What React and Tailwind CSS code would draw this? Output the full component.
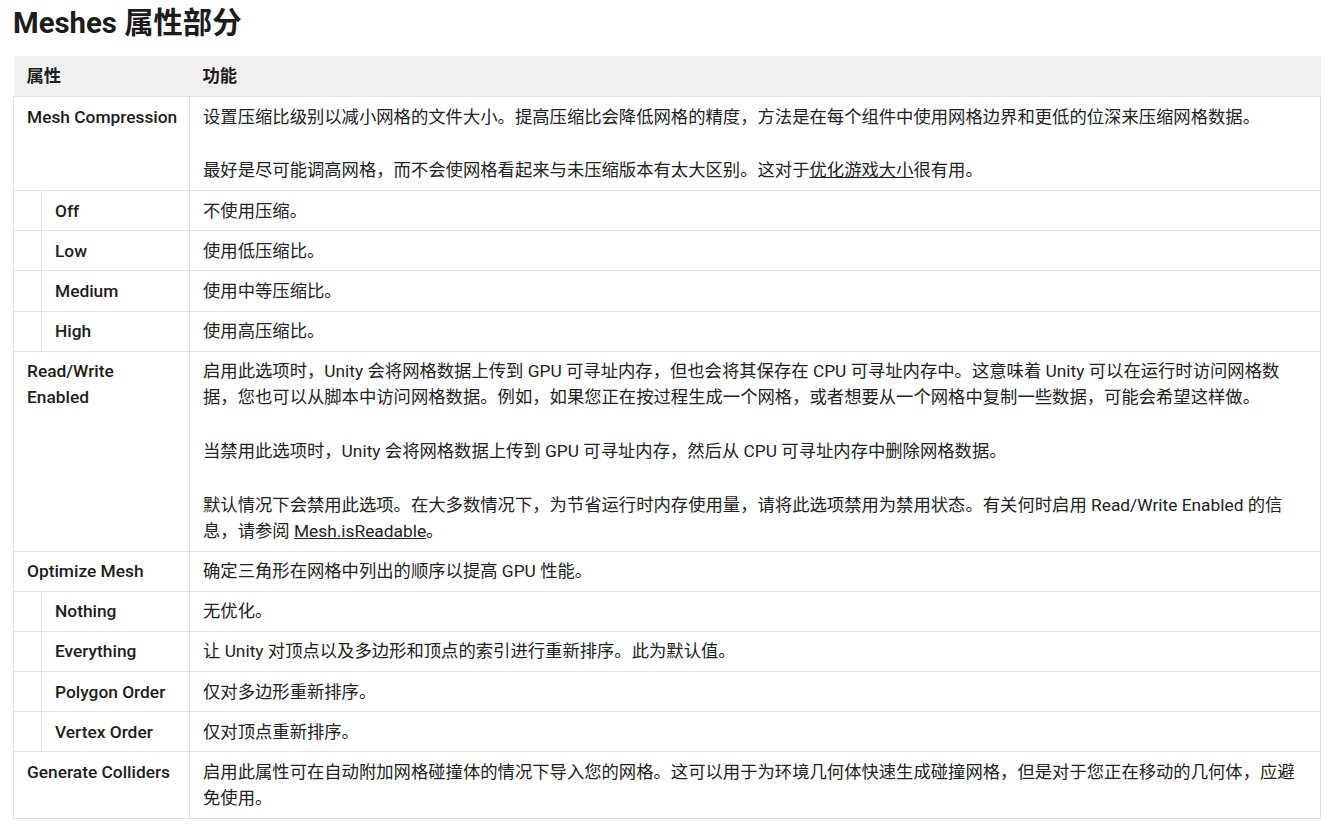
import React from "react";

const F = { fontFamily: "Roboto, 'Noto Sans CJK SC', sans-serif" };

function Main({ name, children }) {
  return (
    <tr>
      <td colSpan={2} className="border border-[#e2e2e2] pl-[13px] pr-[14px] py-[6.6px] align-top font-medium text-[#1d1d1d] whitespace-nowrap">
        {name}
      </td>
      <td className="border border-[#e2e2e2] pl-[13px] pr-[14px] py-[6.6px] align-top">{children}</td>
    </tr>
  );
}

function Sub({ name, children }) {
  return (
    <tr>
      <td className="border border-[#e2e2e2]"></td>
      <td className="border border-[#e2e2e2] pl-[13px] pr-[14px] py-[6.6px] align-top font-medium text-[#1d1d1d] whitespace-nowrap">
        {name}
      </td>
      <td className="border border-[#e2e2e2] pl-[13px] pr-[14px] py-[6.6px] align-top">{children}</td>
    </tr>
  );
}

function P({ children, last }) {
  return <p className={last ? "" : "mb-[27.8px]"}>{children}</p>;
}

export default function App() {
  return (
    <div style={F} className="bg-white min-h-[824px] pl-[13px] pr-[5px] pt-[3px] text-[#222] text-[17.33px] leading-[26px]">
      <h1 className="text-[29.33px] font-bold leading-[40px] text-[#1c1c1c] mb-[13px]">Meshes 属性部分</h1>
      <table className="w-[1308px] table-fixed border-collapse">
        <colgroup>
          <col className="w-[28px]" />
          <col className="w-[148px]" />
          <col />
        </colgroup>
        <thead>
          <tr className="bg-[#f0f0f0]">
            <th colSpan={2} className="pl-[13px] pr-[14px] py-[7px] text-left font-bold text-[#1d1d1d]">属性</th>
            <th className="pl-[13px] pr-[14px] py-[7px] text-left font-bold text-[#1d1d1d]">功能</th>
          </tr>
        </thead>
        <tbody>
          <Main name="Mesh Compression">
            <P>设置压缩比级别以减小网格的文件大小。提高压缩比会降低网格的精度，方法是在每个组件中使用网格边界和更低的位深来压缩网格数据。</P>
            <P last>
              最好是尽可能调高网格，而不会使网格看起来与未压缩版本有太大区别。这对于<span className="underline">优化游戏大小</span>很有用。
            </P>
          </Main>
          <Sub name="Off">不使用压缩。</Sub>
          <Sub name="Low">使用低压缩比。</Sub>
          <Sub name="Medium">使用中等压缩比。</Sub>
          <Sub name="High">使用高压缩比。</Sub>
          <Main name={<>Read/Write<br />Enabled</>}>
            <P>启用此选项时，Unity 会将网格数据上传到 GPU 可寻址内存，但也会将其保存在 CPU 可寻址内存中。这意味着 Unity 可以在运行时访问网格数据，您也可以从脚本中访问网格数据。例如，如果您正在按过程生成一个网格，或者想要从一个网格中复制一些数据，可能会希望这样做。</P>
            <P>当禁用此选项时，Unity 会将网格数据上传到 GPU 可寻址内存，然后从 CPU 可寻址内存中删除网格数据。</P>
            <P last>
              默认情况下会禁用此选项。在大多数情况下，为节省运行时内存使用量，请将此选项禁用为禁用状态。有关何时启用 Read/Write Enabled 的信息，请参阅 <span className="underline">Mesh.isReadable</span>。
            </P>
          </Main>
          <Main name="Optimize Mesh">确定三角形在网格中列出的顺序以提高 GPU 性能。</Main>
          <Sub name="Nothing">无优化。</Sub>
          <Sub name="Everything">让 Unity 对顶点以及多边形和顶点的索引进行重新排序。此为默认值。</Sub>
          <Sub name="Polygon Order">仅对多边形重新排序。</Sub>
          <Sub name="Vertex Order">仅对顶点重新排序。</Sub>
          <Main name="Generate Colliders">启用此属性可在自动附加网格碰撞体的情况下导入您的网格。这可以用于为环境几何体快速生成碰撞网格，但是对于您正在移动的几何体，应避免使用。</Main>
        </tbody>
      </table>
    </div>
  );
}
